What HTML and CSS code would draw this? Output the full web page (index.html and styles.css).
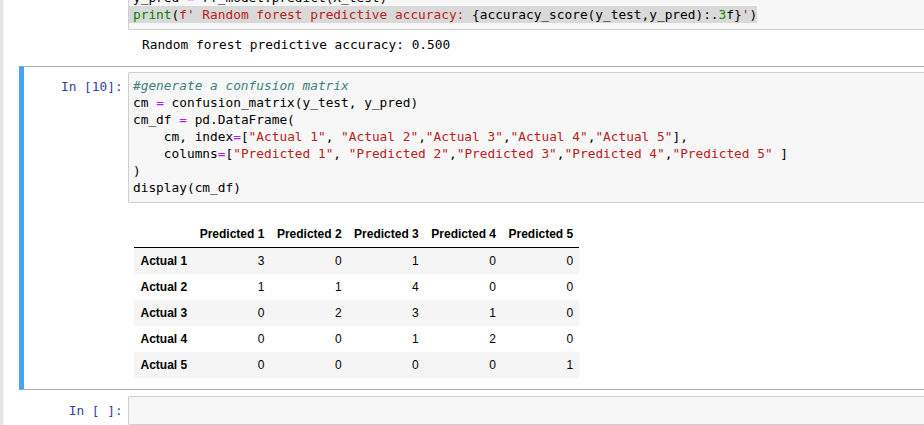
FILE: index.html
```html
<!DOCTYPE html>
<html>
<head>
<meta charset="utf-8">
<link rel="stylesheet" href="styles.css">
</head>
<body>
<div class="page">
  <div class="gutter"></div>
  <div class="notebook">
    <div class="cell">
      <div class="row">
        <div class="prompt"></div>
        <div class="input-area">
          <div class="ln">y_pred <span class="o">=</span> rf_model.predict(X_test)</div>
          <div class="ln sel"><span class="b">print</span>(<span class="s">f' Random forest predictive accuracy: </span>{accuracy_score(y_test,y_pred):.<span class="n">3</span>f}<span class="s">'</span>)</div>
        </div>
      </div>
      <div class="row">
        <div class="prompt out"></div>
        <div class="output-text">Random forest predictive accuracy: 0.500</div>
      </div>
    </div>

    <div class="cell selected">
      <div class="row">
        <div class="prompt">In [10]:</div>
        <div class="input-area">
          <div class="ln"><span class="c">#generate a confusion matrix</span></div>
          <div class="ln">cm <span class="o">=</span> confusion_matrix(y_test, y_pred)</div>
          <div class="ln">cm_df <span class="o">=</span> pd.DataFrame(</div>
          <div class="ln">    cm, index<span class="o">=</span>[<span class="s">"Actual 1"</span>, <span class="s">"Actual 2"</span>,<span class="s">"Actual 3"</span>,<span class="s">"Actual 4"</span>,<span class="s">"Actual 5"</span>],</div>
          <div class="ln">    columns<span class="o">=</span>[<span class="s">"Predicted 1"</span>, <span class="s">"Predicted 2"</span>,<span class="s">"Predicted 3"</span>,<span class="s">"Predicted 4"</span>,<span class="s">"Predicted 5"</span> ]</div>
          <div class="ln">)</div>
          <div class="ln">display(cm_df)</div>
        </div>
      </div>
      <div class="row">
        <div class="prompt out"></div>
        <div class="output-html">
          <table class="dataframe">
            <thead>
              <tr><th></th><th>Predicted 1</th><th>Predicted 2</th><th>Predicted 3</th><th>Predicted 4</th><th>Predicted 5</th></tr>
            </thead>
            <tbody>
              <tr><th>Actual 1</th><td>3</td><td>0</td><td>1</td><td>0</td><td>0</td></tr>
              <tr><th>Actual 2</th><td>1</td><td>1</td><td>4</td><td>0</td><td>0</td></tr>
              <tr><th>Actual 3</th><td>0</td><td>2</td><td>3</td><td>1</td><td>0</td></tr>
              <tr><th>Actual 4</th><td>0</td><td>0</td><td>1</td><td>2</td><td>0</td></tr>
              <tr><th>Actual 5</th><td>0</td><td>0</td><td>0</td><td>0</td><td>1</td></tr>
            </tbody>
          </table>
        </div>
      </div>
    </div>

    <div class="cell">
      <div class="row">
        <div class="prompt">In [ ]:</div>
        <div class="input-area">
          <div class="ln"> </div>
        </div>
      </div>
    </div>
  </div>
</div>
</body>
</html>
```

FILE: styles.css
```css
* { box-sizing: border-box; }
html, body { margin: 0; padding: 0; }
body {
  width: 924px;
  height: 425px;
  overflow: hidden;
  background: #fff;
  color: #000;
  font-family: "DejaVu Sans Mono", monospace;
}
.page { display: flex; height: 100%; }
.gutter {
  width: 3px;
  flex: none;
  background: #e6e6e6;
  box-shadow: 1px 0 1px rgba(0, 0, 0, 0.04);
}
.notebook {
  flex: 1;
  min-width: 0;
  padding-left: 16px;
  margin-top: -22px;
}
.cell {
  border: 1px solid transparent;
  border-left: 5px solid transparent;
  border-right: none;
  padding: 5px 0;
}
.cell.selected {
  border-top-color: #ababab;
  border-bottom-color: #ababab;
  border-left-color: #42a5f5;
}
.row { display: flex; }
.prompt {
  width: 104px;
  flex: none;
  padding: 5.6px 5.4px 0 0;
  text-align: right;
  color: #303f9f;
  font-size: 12.8px;
  line-height: 17px;
  white-space: pre;
}
.input-area {
  flex: 1;
  min-width: 0;
  background: #f7f7f7;
  border: 1px solid #cfcfcf;
  border-right: none;
  border-radius: 2px 0 0 2px;
  padding: 4px 0 6px;
  font-size: 12.8px;
  line-height: 17px;
}
.ln { padding-left: 4px; white-space: pre; height: 17px; }
.ln.sel { width: fit-content; background: #d9d9d9; }
.c { color: #408080; font-style: italic; }
.o { color: #aa22ff; }
.s { color: #ba2121; }
.b { color: #008000; }
.n { color: #008800; }

.output-text {
  padding: 6px 0 7px 14px;
  font-size: 12.8px;
  line-height: 17px;
  white-space: pre;
}
.output-html { padding: 18px 0 6px 6px; }
.dataframe {
  border-collapse: collapse;
  border-spacing: 0;
  font-family: "Liberation Sans", Arial, sans-serif;
  font-size: 12px;
  color: #000;
}
.dataframe th, .dataframe td {
  padding: 6px 6px 6px 6.5px;
  line-height: normal;
  text-align: right;
  vertical-align: middle;
  border: none;
}
.dataframe th { font-weight: bold; }
.dataframe tbody th { text-align: left; }
.dataframe thead th { border-bottom: 1px solid #000; }
.dataframe tbody tr:nth-child(odd) { background: #f5f5f5; }
```
